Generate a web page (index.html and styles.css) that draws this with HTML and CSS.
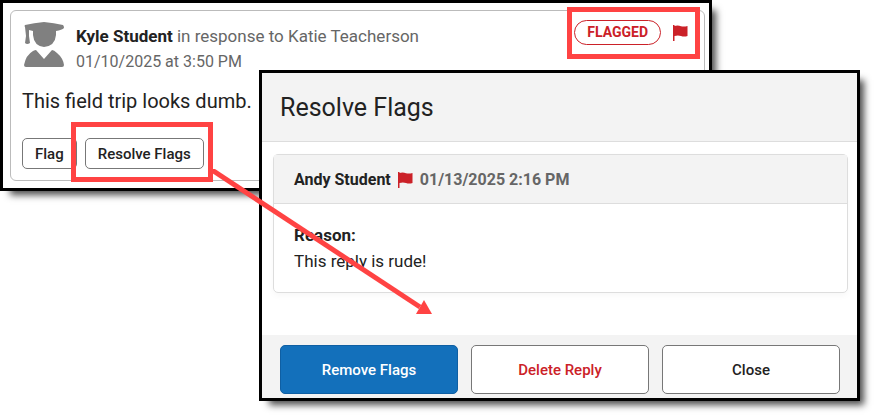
FILE: index.html
```
<!DOCTYPE html>
<html lang="en">
<head>
  <meta charset="UTF-8">
  <meta name="viewport" content="width=device-width, initial-scale=1">
  <title>Resolve Flags</title>
  <link rel="stylesheet" href="styles.css">
</head>
<body>
  <div class="stage">

    <!-- Flagged reply -->
    <section class="panel">
      <article class="reply">
        <header class="reply-header">
          <svg class="avatar" viewBox="0 0 40 46" aria-hidden="true">
            <path d="M1 5 Q0 4 1 3 Q10 1 20 0 Q30 1 39 3 Q40 4 40 6 Q38 8 32 9 V13 Q31 24 20 25 Q10 24 9 13 V9 L5 8 V14 L6 21 Q3 23 1 21 L2 14 Z"/>
            <path d="M12 28 L20 37 L28 28 Q30 28 33 31 Q39 36 40 43 Q40 45 38 45 H2 Q0 45 0 43 Q2 33 9 29 Q11 28 12 28 Z"/>
          </svg>
          <div class="byline">
            <div class="author"><strong>Kyle Student</strong> in response to Katie Teacherson</div>
            <div class="date">01/10/2025 at 3:50 PM</div>
          </div>
          <div class="status">
            <span class="badge">FLAGGED</span>
            <svg class="flag" viewBox="0 0 15 16" aria-hidden="true">
              <path d="M0 0 H1.5 V1 Q5 0 8 1.3 Q11 2 14.5 1 V11 Q11 12 8 11 Q5 10 1.5 11 V16 H0 Z"/>
            </svg>
            <span class="highlight highlight-status"></span>
          </div>
        </header>
        <p class="reply-text">This field trip looks dumb.</p>
        <div class="reply-actions">
          <button type="button" class="btn btn-small">Flag</button>
          <div class="resolve">
            <button type="button" class="btn btn-small">Resolve Flags</button>
            <span class="highlight highlight-resolve"></span>
          </div>
        </div>
      </article>
    </section>

    <!-- Dialog opened by Resolve Flags -->
    <section class="dialog" role="dialog" aria-labelledby="dialog-title">
      <header class="dialog-header">
        <h1 id="dialog-title">Resolve Flags</h1>
      </header>
      <div class="dialog-body">
        <div class="card">
          <div class="card-header">
            <span>Andy Student</span>
            <svg class="flag" viewBox="0 0 15 16" aria-hidden="true">
              <path d="M0 0 H1.5 V1 Q5 0 8 1.3 Q11 2 14.5 1 V11 Q11 12 8 11 Q5 10 1.5 11 V16 H0 Z"/>
            </svg>
            <span class="card-date">01/13/2025 2:16 PM</span>
          </div>
          <div class="card-body">
            <strong>Reason:</strong>
            <p>This reply is rude!</p>
          </div>
        </div>
      </div>
      <footer class="dialog-footer">
        <button type="button" class="btn btn-primary">Remove Flags</button>
        <button type="button" class="btn btn-danger">Delete Reply</button>
        <button type="button" class="btn">Close</button>
      </footer>
    </section>

    <!-- Arrow from the button to the dialog -->
    <svg class="arrow" viewBox="0 0 222 146" aria-hidden="true">
      <path class="arrow-line" d="M0 1 L208 138"/>
      <path class="arrow-head" d="M220 145 L204 145 L212 131 Z"/>
    </svg>
  </div>
</body>
</html>
```

FILE: styles.css
```
* {
  box-sizing: border-box;
}

body {
  margin: 0;
  background: #fff;
  color: #222;
  font-family: Roboto, "Liberation Sans", sans-serif;
  font-size: 17px;
  line-height: 26px;
}

h1,
p {
  margin: 0;
}

/* Panel and dialog share one grid cell so the dialog overlaps the panel */
.stage {
  position: relative;
  display: grid;
}

.panel,
.dialog {
  grid-area: 1 / 1;
  border: 3px solid #000;
  background: #fff;
  box-shadow: 7px 7px 7px -3px rgba(0, 0, 0, 0.7);
}

/* Reply panel */
.panel {
  align-self: start;
  margin-right: 165px;
  padding: 7px 4px 7px 7px;
}

.reply {
  padding: 11px;
  border: 1px solid #bbb;
  border-radius: 6px;
}

.reply-header {
  display: flex;
  gap: 12px;
}

.avatar {
  width: 40px;
  height: 46px;
  margin-left: 2px;
  fill: #808080;
}

.byline {
  flex: 1;
  padding-top: 1px;
  color: #666;
}

.author strong {
  color: #222;
}

.date {
  font-size: 16px;
}

.status {
  position: relative;
  display: flex;
  align-items: center;
  gap: 12px;
  height: 25px;
  margin: -2px 5px 0 0;
}

.badge {
  padding: 0 12px;
  border: 1px solid #cb2128;
  border-radius: 13px;
  color: #cb2128;
  font-size: 14px;
  font-weight: 700;
  line-height: 23px;
}

.flag {
  width: 15px;
  height: 16px;
  fill: #cb2128;
}

.reply-text {
  margin-top: 13px;
  font-size: 20px;
}

.reply-actions {
  display: flex;
  gap: 8px;
  margin-top: 24px;
}

/* Buttons */
.btn {
  flex: 1;
  height: 49px;
  padding: 0 12px;
  border: 1px solid #777;
  border-radius: 5px;
  background: #fff;
  color: #222;
  font-family: inherit;
  font-size: 15px;
  font-weight: 500;
}

.btn-small {
  flex: none;
  height: 31px;
}

.btn-primary {
  border-color: #0f5fa3;
  background: #1370bb;
  color: #fff;
}

.btn-danger {
  color: #cb2128;
}

/* Callouts */
.resolve {
  position: relative;
}

.highlight {
  position: absolute;
  border: 5px solid #ff4343;
}

.highlight-status {
  inset: -13px -12px -14px -7px;
}

.highlight-resolve {
  inset: -16px -9px -13px -14px;
}

.arrow {
  position: absolute;
  top: 169px;
  left: 212px;
  width: 222px;
  height: 146px;
}

.arrow-line {
  stroke: #ff4343;
  stroke-width: 5;
}

.arrow-head {
  fill: #ff4343;
}

/* Dialog */
.dialog {
  margin: 70px 17px 16px 259px;
}

.dialog-header {
  padding: 22px 18px 20px;
  border-bottom: 1px solid #ddd;
  background: #f3f3f3;
}

.dialog-header h1 {
  font-size: 25px;
  font-weight: 400;
  line-height: 26px;
}

.dialog-body {
  padding: 12px 9px 42px 11px;
}

.card {
  border: 1px solid #ddd;
  border-radius: 5px;
  box-shadow: 0 3px 6px rgba(0, 0, 0, 0.03);
}

.card-header {
  display: flex;
  align-items: center;
  gap: 7px;
  padding: 12px 20px 10px;
  border-bottom: 1px solid #ddd;
  background: #f3f3f3;
  font-size: 16px;
  font-weight: 700;
}

.card-date {
  color: #666;
}

.card-body {
  padding: 18px 20px;
}

.dialog-footer {
  display: flex;
  gap: 13px;
  padding: 10px 17px 4px 18px;
  background: #f3f3f3;
}
```
